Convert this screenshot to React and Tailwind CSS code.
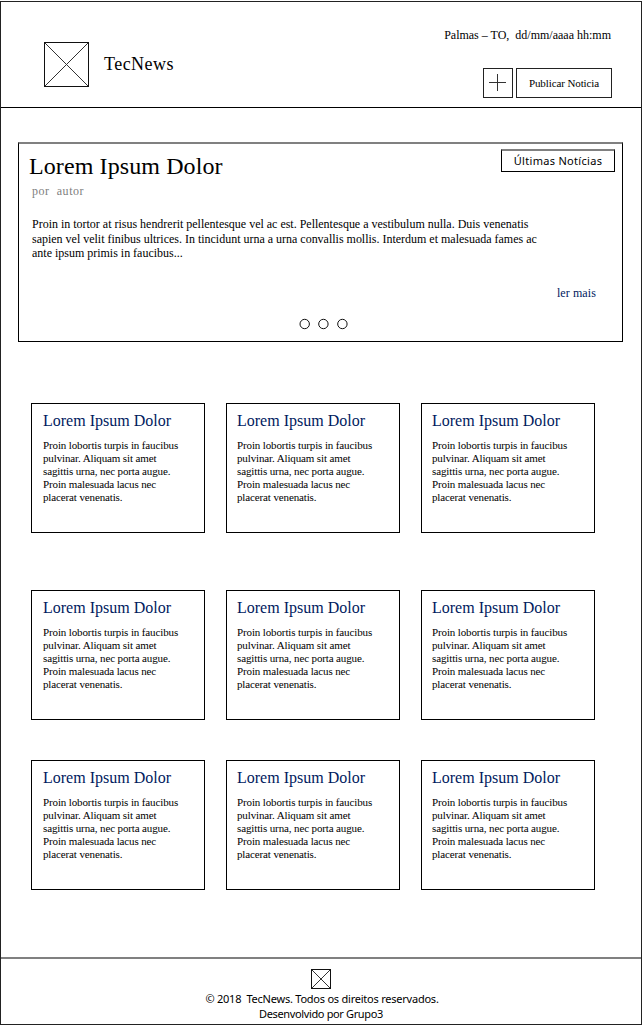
const SERIF = "font-['Liberation_Serif',serif]";
const SANS = "font-['Noto_Sans',sans-serif]";

function CrossBox({ size, className = "" }) {
  return (
    <svg width={size} height={size} className={className} fill="none" strokeWidth="1">
      <rect x="0.5" y="0.5" width={size - 1} height={size - 1} stroke="#111" />
      <path d={`M1 1L${size - 1} ${size - 1}M${size - 1} 1L1 ${size - 1}`} stroke="#333" />
    </svg>
  );
}

function Header() {
  return (
    <header className="flex h-[106px] justify-between border-b border-black pr-[30px] pl-[43px]">
      <div className="flex pt-10">
        <CrossBox size={45} className="shrink-0" />
        <h1 className="mt-[11px] ml-[15px] text-[18px] leading-[22px] tracking-[0.45px] whitespace-nowrap">TecNews</h1>
      </div>
      <div className="flex flex-col items-end">
        <p className="mt-[25px] text-[12px] leading-4 whitespace-pre">Palmas – TO,  dd/mm/aaaa hh:mm</p>
        <div className="mt-[25px] -mr-px flex gap-[3px]">
          <button className="flex h-[30px] w-[30px] items-center justify-center border border-[#222]">
            <svg width="18" height="18" stroke="#333" strokeWidth="1">
              <path d="M8.5 0v17M0 8.5h17" />
            </svg>
          </button>
          <button className="h-[30px] w-24 border border-[#222] text-[11px] tracking-[-0.1px] whitespace-nowrap">
            Publicar Noticia
          </button>
        </div>
      </div>
    </header>
  );
}

function Hero() {
  return (
    <section className="mt-[34px] ml-[17px] flex h-[200px] w-[605px] flex-col border border-t-2 border-black border-t-[#808080] pr-[7px] pl-[10px]">
      <div className="flex justify-between">
        <h2 className="mt-[7px] text-[24px] leading-[30px] tracking-[0.1px] whitespace-nowrap">Lorem Ipsum Dolor</h2>
        <div className={`mt-[5px] h-[23px] w-[114px] border border-t-2 border-black border-t-[#808080] text-center text-[11px] leading-5 tracking-[0.3px] whitespace-nowrap ${SANS}`}>
          Últimas Notícias
        </div>
      </div>
      <p className="mt-[2px] ml-[3px] text-[12px] leading-4 tracking-[0.55px] whitespace-pre text-[#808080]">por  autor</p>
      <div className="mt-[18px] ml-[3px] text-[12px] leading-[14.5px] tracking-[-0.01px] whitespace-nowrap">
        <p>Proin in tortor at risus hendrerit pellentesque vel ac est. Pellentesque a vestibulum nulla. Duis venenatis</p>
        <p>sapien vel velit finibus ultrices. In tincidunt urna a urna convallis mollis. Interdum et malesuada fames ac</p>
        <p>ante ipsum primis in faucibus...</p>
      </div>
      <a className="mt-6 mr-[19px] self-end text-[12px] leading-4 tracking-[0.1px] text-[#001a5e]">ler mais</a>
      <svg width="50" height="12" className="mt-[17px] ml-[269px]" fill="none" stroke="#111">
        <circle cx="6.7" cy="6" r="4.7" />
        <circle cx="25.4" cy="6" r="4.7" />
        <circle cx="44.4" cy="6" r="4.7" />
      </svg>
    </section>
  );
}

const LINES = [
  "Proin lobortis turpis in faucibus",
  "pulvinar. Aliquam sit amet",
  "sagittis urna, nec porta augue.",
  "Proin malesuada lacus nec",
  "placerat venenatis.",
];

function Card() {
  return (
    <article className="h-[130px] w-[174px] border border-black pt-2 pl-[10px] first:pl-[11px]">
      <h3 className="text-[16px] leading-[18px] whitespace-nowrap text-[#001a5e]">Lorem Ipsum Dolor</h3>
      <div className="mt-[9px] text-[11px] leading-[13px] tracking-[-0.13px] whitespace-nowrap">
        {LINES.map((line) => (
          <p key={line}>{line}</p>
        ))}
      </div>
    </article>
  );
}

function CardRow({ className }) {
  return (
    <div className={`ml-[30px] flex gap-[21px] ${className}`}>
      <Card />
      <Card />
      <Card />
    </div>
  );
}

function Footer() {
  return (
    <footer className={`mt-auto flex h-[67px] flex-col items-center border-t-2 border-[#808080] pt-[10px] text-[11px] leading-[15px] ${SANS}`}>
      <CrossBox size={20} className="mb-[2px] shrink-0" />
      <p className="ml-[2px] tracking-[-0.23px] whitespace-pre">© 2018  TecNews. Todos os direitos reservados.</p>
      <p className="tracking-[-0.36px] whitespace-nowrap">Desenvolvido por Grupo3</p>
    </footer>
  );
}

export default function App() {
  return (
    <div className="h-[1028px] w-[642px] bg-white pt-px text-black">
      <div className={`flex h-[1024px] flex-col border border-[#222] ${SERIF}`}>
        <Header />
        <Hero />
        <main>
          <CardRow className="mt-[61px]" />
          <CardRow className="mt-[57px]" />
          <CardRow className="mt-10" />
        </main>
        <Footer />
      </div>
    </div>
  );
}
